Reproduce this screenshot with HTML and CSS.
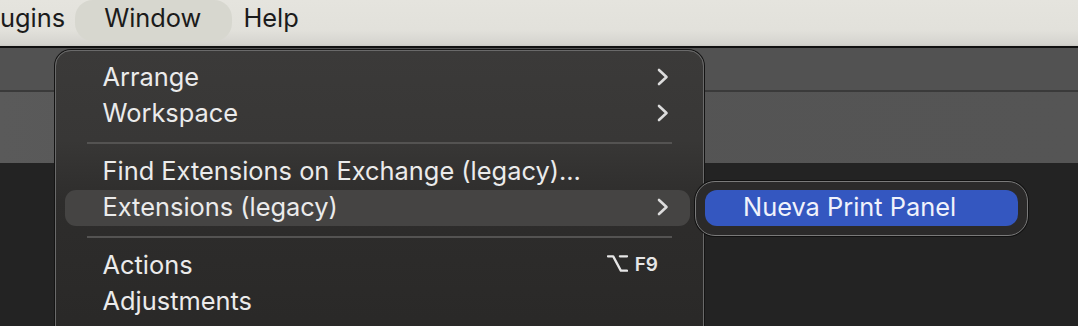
FILE: index.html
```html
<!DOCTYPE html>
<html lang="en">
<head>
<meta charset="utf-8">
<title>Window menu</title>
<link rel="stylesheet" href="styles.css">
</head>
<body>
<div class="screen">
  <header class="menubar">
    <span class="mb-item mb-cut">ugins</span>
    <span class="mb-item mb-active">Window</span>
    <span class="mb-item mb-help">Help</span>
  </header>
  <div class="app">
    <div class="band band-top"></div>
    <div class="band band-tools"></div>
    <div class="canvas"></div>
  </div>

  <nav class="menu">
    <div class="row"><span class="label">Arrange</span><svg class="chev" viewBox="0 0 12 18"><path d="M2 2 L9.5 9 L2 16" /></svg></div>
    <div class="row"><span class="label">Workspace</span><svg class="chev" viewBox="0 0 12 18"><path d="M2 2 L9.5 9 L2 16" /></svg></div>
    <div class="sep"></div>
    <div class="row"><span class="label">Find Extensions on Exchange (legacy)...</span></div>
    <div class="row row-open"><span class="label">Extensions (legacy)</span><svg class="chev" viewBox="0 0 12 18"><path d="M2 2 L9.5 9 L2 16" /></svg></div>
    <div class="sep"></div>
    <div class="row"><span class="label">Actions</span><span class="shortcut"><svg class="opt" viewBox="0 0 22 19" aria-label="Option"><path d="M1 2 H6.5 L14.5 17 H21 M13.5 2 H21" /></svg><span class="key">F9</span></span></div>
    <div class="row"><span class="label">Adjustments</span></div>
  </nav>

  <div class="submenu">
    <div class="sub-row">Nueva Print Panel</div>
  </div>
</div>
</body>
</html>
```
FILE: styles.css
```css
* { box-sizing: border-box; }
html, body { margin: 0; padding: 0; }
body {
  width: 1078px;
  height: 326px;
  overflow: hidden;
  background: #232323;
  font-family: Inter, "Noto Sans", "Liberation Sans", sans-serif;
}
.screen {
  position: relative;
  width: 1078px;
  height: 326px;
  overflow: hidden;
}
.menubar {
  height: 48px;
  display: flex;
  align-items: flex-start;
  background: linear-gradient(#e5e4de 0, #e2e1db 30px, #d5d4cf 44px, #c9c8c3 46px);
  border-bottom: 2px solid #111;
}
.mb-item {
  font-size: 25.4px;
  color: #1b1b1b;
  height: 41px;
  line-height: 35px;
  border-radius: 18px;
  white-space: nowrap;
}
.mb-cut { margin-left: 0; margin-right: 10px; }
.mb-active { background: #d7d7cf; padding: 0 31px 0 29px; }
.mb-help { margin-left: 11px; }
.app { display: flex; flex-direction: column; }
.band-top { height: 44px; background: #525252; border-bottom: 2px solid #3a3a3a; }
.band-tools { height: 71px; background: linear-gradient(90deg, #5a5a5a, #545454 40%, #555 100%); }
.canvas { height: 200px; background: #232323; }

.menu {
  position: absolute;
  left: 55px;
  top: 50px;
  width: 649px;
  height: 300px;
  padding: 9px 13px 0 9px;
  border-radius: 16px;
  background: linear-gradient(#3b3a39 0, #383736 90px, #2e2d2c 150px, #292827 100%);
  border: 1.5px solid #6a6a6a;
  box-shadow: 0 0 0 1px #141414;
  display: flex;
  flex-direction: column;
}
.row {
  height: 36px;
  display: flex;
  align-items: center;
  padding: 0 21px 3px 37.5px;
  border-radius: 11px;
  color: #ebebeb;
  font-size: 25.4px;
}
.label { flex: 1; white-space: nowrap; }
.row-open { background: #454443; }
.chev { width: 12px; height: 18px; }
.chev path { fill: none; stroke: #dcdcdc; stroke-width: 2.6; stroke-linecap: round; stroke-linejoin: round; }
.sep {
  height: 22px;
  display: flex;
  align-items: center;
  padding: 0 18px 0 22px;
}
.sep::before {
  content: "";
  flex: 1;
  height: 2px;
  background: #545352;
}
.shortcut { display: flex; align-items: center; gap: 7px; color: #e6e6e6; margin-right: 11px; }
.opt { width: 21px; height: 19px; margin-bottom: 3px; }
.opt path { fill: none; stroke: #e6e6e6; stroke-width: 2.4; stroke-linecap: round; stroke-linejoin: round; }
.key { font-weight: 600; font-size: 19px; }

.submenu {
  position: absolute;
  left: 695px;
  top: 181px;
  width: 333px;
  height: 55px;
  padding: 8px 9px;
  border-radius: 20px;
  background: #2b2a2a;
  border: 1.5px solid #7a7a7a;
  box-shadow: 0 0 0 1px #111;
}
.sub-row {
  height: 36px;
  border-radius: 12px;
  background: #3457c0;
  color: #f0f2fb;
  font-size: 25.4px;
  line-height: 34px;
  padding-left: 38px;
}
```
